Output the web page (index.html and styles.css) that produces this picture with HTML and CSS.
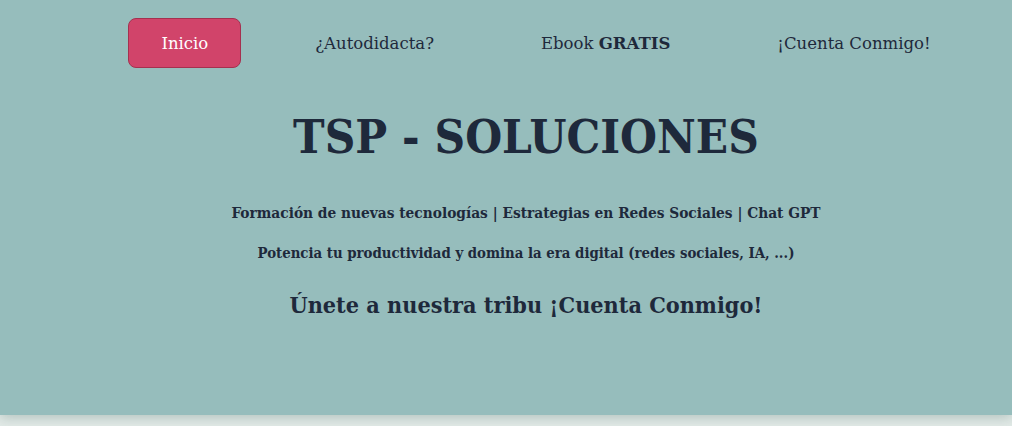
FILE: index.html
```html
<!DOCTYPE html>
<html lang="es">
<head>
<meta charset="utf-8">
<title>TSP - Soluciones</title>
<link rel="stylesheet" href="styles.css">
</head>
<body>
<header class="hero">
  <nav class="nav">
    <ul class="nav-list">
      <li><a class="nav-link nav-link--active" href="#">Inicio</a></li>
      <li><a class="nav-link" href="#">¿Autodidacta?</a></li>
      <li><a class="nav-link" href="#">Ebook <strong>GRATIS</strong></a></li>
      <li><a class="nav-link" href="#">¡Cuenta Conmigo!</a></li>
    </ul>
  </nav>
  <div class="hero-content">
    <h1 class="title">TSP - SOLUCIONES</h1>
    <p class="tagline">Formación de nuevas tecnologías | Estrategias en Redes Sociales | Chat GPT</p>
    <p class="tagline tagline--second">Potencia tu productividad y domina la era digital (redes sociales, IA, ...)</p>
    <h2 class="cta">Únete a nuestra tribu ¡Cuenta Conmigo!</h2>
  </div>
</header>
<main class="page"></main>
</body>
</html>
```
FILE: styles.css
```css
html, body {
  margin: 0;
  padding: 0;
}
body {
  background: #e3ebe8;
  font-family: "DejaVu Serif", "Liberation Serif", serif;
  color: #1e293b;
}
.hero {
  background: #96bdbc;
  height: 415px;
  box-shadow: 0 3px 12px rgba(40, 80, 70, 0.25);
  position: relative;
  overflow: hidden;
}
.nav-list {
  list-style: none;
  margin: 0;
  padding: 18px 0 0 80px;
  display: flex;
  justify-content: center;
  gap: 41px;
}
.nav-link {
  display: flex;
  align-items: center;
  height: 50px;
  box-sizing: border-box;
  padding: 0 32px;
  color: #1e293b;
  text-decoration: none;
  font-size: 16.5px;
  border: 1px solid transparent;
  border-radius: 8px;
  white-space: pre;
}
.nav-link--active {
  background: #d1446a;
  border-color: #a5304f;
  color: #fff;
}
.hero-content {
  padding-left: 40px;
  text-align: center;
  font-stretch: condensed;
}
.title {
  margin: 39px 0 0;
  font-size: 47.2px;
  line-height: 60px;
  font-weight: 700;
}
.tagline {
  margin: 36px 0 0;
  font-size: 15.3px;
  font-weight: 700;
  line-height: 20px;
}
.tagline--second {
  margin-top: 20px;
  font-size: 14.8px;
}
.cta {
  margin: 26px 0 0;
  font-size: 23.2px;
  font-weight: 700;
  line-height: 32px;
}
.page {
  min-height: 20px;
}
```
